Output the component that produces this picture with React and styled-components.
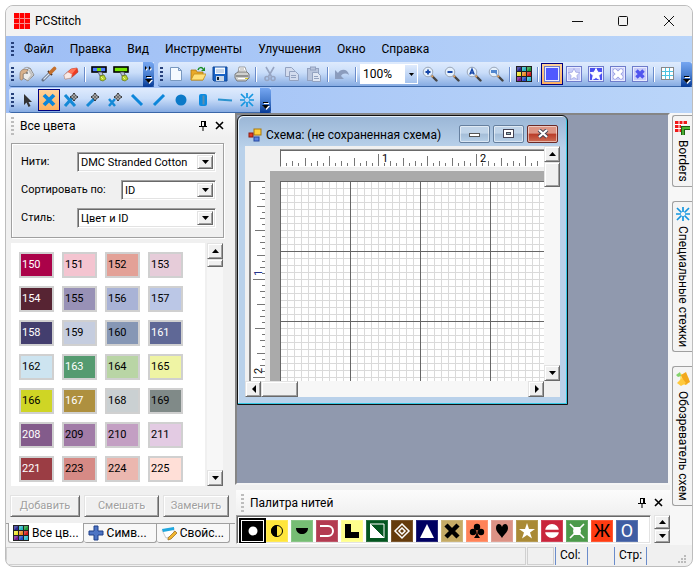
import { useState } from 'react';
import styled, { createGlobalStyle, css } from 'styled-components';

const MENU = ['Файл', 'Правка', 'Вид', 'Инструменты', 'Улучшения', 'Окно', 'Справка']

const THREADS = [
    ['150', '#ab0249', 1], ['151', '#f4c4d0'], ['152', '#e3a197'], ['153', '#e6ccd9'],
    ['154', '#572433', 1], ['155', '#9891b6'], ['156', '#a9b3d6'], ['157', '#bbc7e6'],
    ['158', '#433e6e', 1], ['159', '#c5cddf'], ['160', '#8697b5'], ['161', '#5f6896', 1],
    ['162', '#cde4f0'], ['163', '#559b70', 1], ['164', '#b9d5a5'], ['165', '#eff4a4'],
    ['166', '#cfd525'], ['167', '#ae903f', 1], ['168', '#cad0d2'], ['169', '#808a88'],
    ['208', '#835b8b', 1], ['209', '#a17ba7'], ['210', '#c39fc3'], ['211', '#e3cbe3'],
    ['221', '#9b3d44', 1], ['223', '#d68a85'], ['224', '#ebb7af'], ['225', '#ffdfd7'],
]

const TILES = ['#2a2a90', '#27b5c4', '#1f9a3a', '#f0e52c', '#f08a20', '#d01818', '#7a1890', '#2448c8', '#30b8d0']

const MiniColors = () => (
    <svg width="16" height="16" viewBox="0 0 16 16" aria-hidden="true">
        <rect width="16" height="16" fill="#222" />
        {TILES.map((c, i) => (
            <g key={c}>
                <rect x={(i % 3) * 5 + 1} y={Math.floor(i / 3) * 5 + 1} width="4" height="4" fill={c} />
                <path d={`M${(i % 3) * 5 + 1} ${Math.floor(i / 3) * 5 + 5}v-4h4z`} fill="#fff" opacity=".22" />
            </g>
        ))}
    </svg>
)

const Lens = ({ children }) => (
    <>
        <path d="M9.500 9.500L14.500 14.500" stroke="#444" strokeWidth="2.400" strokeLinecap="round" />
        <path d="M9.500 9.500l1.500 1.500" stroke="#d9a066" strokeWidth="2" />
        <circle cx="6" cy="6" r="4.800" fill="#e4f0fc" stroke="#9aa6b8" />
        {children}
    </>
)

const Target = ({ x, y }) => (
    <g transform={`translate(${x} ${y})`}>
        <path d="M0-4L1.500-1.500 4 0 1.500 1.500 0 4-1.500 1.500-4 0-1.500-1.500z" fill="#fff" stroke="#222" />
        <path d="M0-2v4M-2 0h4" stroke="#222" strokeWidth=".8" />
    </g>
)

const Marker = ({ multi }) => (
    <>
        <rect x="1" y="1" width="14" height="5" fill={multi ? '#4d7dff' : '#74e600'} stroke="#000" strokeWidth="1.600" />
        {multi && <rect x="6" y="2" width="4" height="3" fill="#7be000" />}
        <path d="M7 6l2 4 3-1-1-3z" fill="#b9c2d2" stroke="#445" strokeWidth=".7" />
        <path d="M9 10l4-1 2 4-3 2-3-1z" fill="#b9d432" stroke="#5f7408" strokeWidth=".7" />
        <path d="M10 11l2 2" stroke="#eff793" />
    </>
)

const STAR = 'M8 2.500l1.800 3.700 4 .5-3 2.800.8 4L8 11.500 4.400 13.500l.8-4-3-2.800 4-.5z'

const Framed = ({ fill = '#c9cdf8', children }) => (
    <>
        <rect x=".5" y=".5" width="15" height="15" fill="#e9ebff" stroke="#6e7ccb" />
        <rect x="2" y="2" width="12" height="12" fill={fill} />
        {children}
    </>
)

const GLYPHS = {
    bucket: <>
        <path d="M4 4C5 1 10 0 12 4" fill="none" stroke="#999" />
        <path d="M4 6l7-4 4 7-6 6-5-3z" fill="#ececec" stroke="#8c8c8c" />
        <path d="M10 4l3 5-4 5" fill="none" stroke="#c2c2c2" strokeWidth="2" />
        <path d="M9 4C5 2 1 4 1 8v5c1 2 3 1 3-1V8l3-1z" fill="#d8b18c" stroke="#94785e" strokeWidth=".7" />
        <circle cx="8" cy="7" r="1" fill="#777" />
    </>,
    dropper: <>
        <path d="M2 14L9 7" stroke="#657186" strokeWidth="3" strokeLinecap="round" />
        <path d="M2.500 13.500L9 7" stroke="#dbe7f5" strokeWidth="1.200" />
        <path d="M7 5l4 4" stroke="#4c3323" strokeWidth="2" />
        <path d="M9.500 6.500L13.500 2.500" stroke="#c4702d" strokeWidth="3.600" strokeLinecap="round" />
    </>,
    eraser: <>
        <path d="M1 9l7-6 6-1 1 4-7 6-6 1z" fill="#ef3b22" stroke="#a73520" strokeWidth=".6" />
        <path d="M1 9l4-3 4 2-1 4-6 1z" fill="#f8e9e5" stroke="#bbb" strokeWidth=".6" />
        <path d="M8 3l6-1-5 6-4-2z" fill="#ff7456" />
    </>,
    markMulti: <Marker multi />,
    mark: <Marker />,
    file: <path d="M2.500 1.500h8l3 3v10h-11z M10.500 1.500v3h3" fill="#f4faff" stroke="#7998bf" />,
    open: <>
        <path d="M1 14V4h5l1 2h6v8z" fill="#e9a92a" stroke="#b07a12" strokeWidth=".8" />
        <path d="M1 14l3-6h12l-3 6z" fill="#ffe07a" stroke="#c18d1a" strokeWidth=".8" />
        <path d="M8 4c1-3 4-3 5-1" fill="none" stroke="#1c8f2b" strokeWidth="1.500" /><path d="M15 1v4h-4z" fill="#1c8f2b" />
    </>,
    save: <>
        <path d="M1 1h14v14H2l-1-1z" fill="#1862c4" stroke="#0c4596" />
        <rect x="3" y="1.500" width="10" height="6.500" fill="#f4f9ff" /><path d="M4 4h8M4 6h8" stroke="#9ab4d6" />
        <rect x="4" y="10" width="8" height="5" fill="#c9d6e6" /><rect x="5" y="11" width="2" height="3" fill="#123" />
    </>,
    print: <>
        <path d="M4 7l1-6h6l2 6z" fill="#fff" stroke="#888" strokeWidth=".8" />
        <path d="M1 8l3-2h9l2 2v4l-3 3H3l-2-3z" fill="#cfd0ce" stroke="#666" strokeWidth=".8" />
        <path d="M2 10h12" stroke="#555" /><path d="M4 12.500h8" stroke="#fff" /><path d="M6 3h4M5 5h6" stroke="#aaa" />
        <rect x="11" y="12" width="3" height="1" fill="#d9cd2c" />
    </>,
    cut: <g fill="none" stroke="#97a5c2" strokeWidth="1.600"><path d="M4 1l5.500 9.500M12 1L6.500 10.500" /><circle cx="5" cy="12.500" r="2" /><circle cx="11" cy="12.500" r="2" /></g>,
    copy: <g fill="#d3dcee" stroke="#93a2c0"><path d="M1.500 1.500h6l3 3v6h-9z" /><path d="M5.500 5.500h6l3 3v6h-9z" /><path d="M7 9.500h5M7 11.500h5" /></g>,
    paste: <g fill="#b8c4dc" stroke="#93a2c0"><rect x="1.500" y="2.500" width="11" height="12" /><rect x="4.500" y="1" width="5" height="3" /><path d="M6.500 6.500h5l3 3v6h-8z" fill="#dfe6f3" /><path d="M8 10.500h4M8 12.500h5" /></g>,
    undo: <path d="M1 4v9h9L7 10c2-3 5-3 8-1-1-6-8-7-11-2z" fill="#8b9cbd" />,
    zoomIn: <Lens><path d="M3.500 6h5M6 3.500v5" stroke="#1646a8" strokeWidth="1.800" /></Lens>,
    zoomOut: <Lens><path d="M3.500 6h5" stroke="#1646a8" strokeWidth="1.800" /></Lens>,
    zoomAll: <Lens><path d="M3.800 8.500L6 3.200l2.200 5.300M4.500 7h3" stroke="#1646a8" strokeWidth="1.400" fill="none" /></Lens>,
    zoomArea: <Lens><path d="M3 4h6v5L7 7H3z" fill="#5187cf" /></Lens>,
    solid: <Framed fill="#5159ff" />,
    star: <Framed><path d={STAR} fill="#fff" stroke="#8d93dc" strokeWidth=".6" /></Framed>,
    starFull: <Framed fill="#4b50f0"><path d={STAR} fill="#fff" stroke="#fff" /></Framed>,
    cross: <Framed>
        <path d="M5 5l6 6M11 5l-6 6" stroke="#8d93dc" strokeWidth="4.600" strokeLinecap="round" />
        <path d="M5 5l6 6M11 5l-6 6" stroke="#fff" strokeWidth="3.600" strokeLinecap="round" />
    </Framed>,
    crossFull: <Framed><path d="M4.500 4.500l7 7M11.500 4.500l-7 7" stroke="#5054ef" strokeWidth="3.400" /></Framed>,
    grid: <>
        <rect x="2" y="2" width="12" height="12" fill="#fff" />
        <path d="M5.500 2v12M9.500 2v12M2 5.500h12M2 9.500h12" stroke="#4cc4e2" />
        <rect x="1.500" y="1.500" width="12" height="12" fill="none" stroke="#888" />
    </>,
    arrow: <path d="M5 2v11l2.500-2.500 2 4.500 2-1-2-4h3.500z" fill="#333" />,
    full: <path d="M3 3l10 10M13 3L3 13" stroke="#0c86da" strokeWidth="3.800" />,
    threeQuarter: <><path d="M2 3l10 11M10 5L2 14" stroke="#1489d6" strokeWidth="3" /><Target x="11" y="5" /></>,
    half: <><path d="M2 14l8-8" stroke="#1489d6" strokeWidth="3" /><Target x="10" y="5" /></>,
    quarter: <><path d="M2 7l6 7M8 7l-6 7" stroke="#1489d6" strokeWidth="2.500" /><Target x="11" y="5" /></>,
    back: <path d="M3 3l10 10" stroke="#0c86da" strokeWidth="3" />,
    slash: <path d="M13 3L3 13" stroke="#0c86da" strokeWidth="3" />,
    knot: <circle cx="8" cy="8" r="5.500" fill="#0b79c8" />,
    bead: <><rect x="4" y="2" width="8" height="12" rx="2" fill="#0d8be0" /><path d="M8.500 3.500v9" stroke="#5d8dae" strokeWidth="2" /></>,
    line: <path d="M1 7.500l14 1" stroke="#2c93cf" strokeWidth="2" />,
    burst: <path d="M8 1v5M8 10v5M1 8h5M10 8h5M2 2l4.500 4.500M9.500 9.500L14 14M14 2L9.500 6.500M6.500 9.500L2 14" stroke="#1496e0" strokeWidth="1.700" fill="none" />,
    plus: <path d="M6 1h4v5h5v4h-5v5H6v-5H1V6h5z" fill="#4d74c4" stroke="#1f3f88" />,
    note: <>
        <path d="M1 5l12-2v7l-8 3z" fill="#fff" stroke="#aaa" strokeWidth=".6" />
        <path d="M1 4l12-2v3L2 7z" fill="#21a8df" />
        <path d="M7 13l7-7 2 2-6 6-3 1z" fill="#f1b62e" stroke="#94661c" strokeWidth=".7" />
    </>,
    borders: <>
        <path d="M0 1h12v4H0zM0 5h6v7H0z" fill="#f01818" />
        <path d="M4 1v11M8 1v4M0 4.500h12M0 8.500h6" stroke="#fff" />
        <path d="M15 8H8v7" fill="none" stroke="#1d5c14" strokeWidth="4" />
        <path d="M15 8H8v7" fill="none" stroke="#4fb635" strokeWidth="1.800" />
    </>,
    browse: <>
        <path d="M5 2l9 5-2 7-7-1z" fill="#ffe27a" />
        <path d="M6 4l5-3 4 10-5 3z" fill="#f2a81d" />
        <path d="M2 12l5-5 4 5-5 3z" fill="#ffc93c" />
        <path d="M1 4l4-3 1 4-3 1z" fill="#84d46c" />
    </>,
    colors: null,
}

const Icon = ({ name }) => name === 'colors' ? <MiniColors /> : (
    <svg width="16" height="16" viewBox="0 0 16 16" aria-hidden="true">{GLYPHS[name]}</svg>
)

const TOOLS = [
    ['bucket', 'dropper', 'eraser', '|', 'markMulti', 'mark'],
    ['file', 'open', 'save', 'print', '|', 'cut', 'copy', 'paste', '|', 'undo', '|'],
    ['zoomIn', 'zoomOut', 'zoomAll', 'zoomArea', '|', 'colors', '|', 'solid', 'star', 'starFull', 'cross', 'crossFull', '|', 'grid'],
    ['arrow', 'full', 'threeQuarter', 'half', 'quarter', 'back', 'slash', 'knot', 'bead', 'line', 'burst'],
]

const TABS = [
    ['Все цв...', 'colors'],
    ['Симв...', 'plus'],
    ['Свойс...', 'note'],
]

const PALETTE = [
    ['#000', <circle cx="11" cy="11" r="4.500" fill="#fff" />],
    ['#ffe63c', <><circle cx="11" cy="11" r="5.500" fill="none" stroke="#000" /><path d="M11 5a6 6 0 0 0 0 12z" /></>],
    ['#76bd74', <path d="M5 8h12c0 8-12 8-12 0z" />],
    ['#b33b51', <path d="M4 6h8a5 5 0 0 1 0 10H4" fill="none" stroke="#fff" strokeWidth="2" />],
    ['#ffff8c', <path d="M4 4h6v8h8v6H4z" />],
    ['#04551f', <><path d="M4 4h14v14z" fill="#04551f" stroke="#fff" /><path d="M4 4v14h14z" fill="#fff" /></>],
    ['#653b0c', <><path d="M11 4l7 7-7 7-7-7z" fill="none" stroke="#fff" strokeWidth="1.500" /><path d="M11 8l3 3-3 3-3-3z" fill="none" stroke="#fff" strokeWidth="1.500" /></>],
    ['#000062', <path d="M11 4l7 14H4z" fill="#fff" />],
    ['#c5ab65', <path d="M5 5l12 12M17 5L5 17" stroke="#000" strokeWidth="4.500" />],
    ['#ff8359', <><circle cx="11" cy="7" r="3.200" /><circle cx="7" cy="12" r="3.200" /><circle cx="15" cy="12" r="3.200" /><path d="M11 9l1 6 2 3H8l2-3z" /></>],
    ['#dc9285', <path d="M11 18C8 13 5 12 5 8c0-5 5-5 6-1 1-4 6-4 6 1 0 4-3 5-6 10z" />],
    ['#aa8a36', <path d="M11 3l2 6h6l-5 3.500 2 6L11 15l-5 3.500 2-6L3 9h6z" fill="#fff" />],
    ['#c9253c', <><circle cx="11" cy="11" r="7" fill="#fff" /><path d="M3 11h16" stroke="#c9253c" strokeWidth="2.500" /></>],
    ['#4c9a4b', <><path d="M4 4l14 14M18 4L4 18" stroke="#fff" strokeWidth="1.600" /><path d="M8 7h6l1 4-1 4H8l-1-4z" fill="#fff" /></>],
    ['#ff3c12', 'Ж', '#000'],
    ['#3f5da3', 'O', '#fff'],
]

function Tools({ names, active }) {
    return names.map((name, i) => name === '|' ? <Sep key={i} /> : (
        <Tool key={i} type="button" aria-label={name} $active={name === active}>
            <Icon name={name} />
        </Tool>
    ))
}

function Overflow({ more }) {
    return (
        <OverflowBtn type="button" aria-label="Параметры">
            <svg width="9" height="20" viewBox="0 0 9 20">
                {more && <path d="M2 2l2 2-2 2zM6 2l2 2-2 2z" fill="#fff" />}
                {more && <path d="M1 1l2 2-2 2zM5 1l2 2-2 2z" />}
                <path d="M3 12.500h5" stroke="#fff" /><path d="M2 11.500h5" stroke="#000" />
                <path d="M2 15h7l-3.500 4z" fill="#fff" /><path d="M1 14h7l-3.500 4z" />
            </svg>
        </OverflowBtn>
    )
}

const TRIANGLES = { up: 'M0 6h7L3.500 2z', down: 'M0 2h7L3.500 6z', left: 'M6 0v8L2 4z', right: 'M2 0v8l4-4z' }

function Triangle({ dir }) {
    return <svg width="7" height="8" viewBox="0 0 7 8"><path d={TRIANGLES[dir]} /></svg>
}

function PanelHead({ title, inset }) {
    return (
        <Head $inset={inset}>
            <Grip $light />
            <HeadTitle>{title}</HeadTitle>
            <HeadBtn type="button" aria-label="Закрепить">
                <svg width="9" height="10" viewBox="0 0 9 10"><path d="M2 .5h5M2.500 0v5M5.500 0v5M6.500 0v5M0 5.500h8M4 6v4" stroke="#000" /></svg>
            </HeadBtn>
            <HeadBtn type="button" aria-label="Закрыть">
                <svg width="9" height="9" viewBox="0 0 9 9"><path d="M1 1l7 7M8 1L1 8" stroke="#000" strokeWidth="1.600" /></svg>
            </HeadBtn>
        </Head>
    )
}

function Field({ id, label, options, short }) {
    return (
        <Row>
            <label htmlFor={id}>{label}</label>
            <Combo $short={short}>
                <Select id={id}>
                    {options.map(o => <option key={o}>{o}</option>)}
                </Select>
                <Knob as="span"><Triangle dir="down" /></Knob>
            </Combo>
        </Row>
    )
}

// 98 units per inch, split into sixteenths
function ticks(count) {
    return Array.from({ length: count }, (_, i) => {
        const n = i + 1
        const size = n % 16 === 0 ? 12 : n % 8 === 0 ? 10 : n % 4 === 0 ? 8 : n % 2 === 0 ? 5 : 3
        return { pos: Math.round(n * 98 / 16) - 1, size }
    })
}

function TopRuler() {
    return (
        <RulerTop>
            <svg width="263" height="16">
                {ticks(42).map(t => <rect key={t.pos} x={t.pos} y={16 - t.size} width="1" height={t.size} fill="#777" />)}
                <text x="101" y="12" fontSize="11">1</text>
                <text x="199" y="12" fontSize="11">2</text>
            </svg>
        </RulerTop>
    )
}

function SideRuler() {
    return (
        <RulerSide>
            <svg width="14" height="200">
                {ticks(32).map(t => <rect key={t.pos} x={14 - t.size} y={t.pos} width={t.size} height="1" fill="#777" />)}
                <text transform="translate(11 94) rotate(-90)" fontSize="11" fill="#22328c">1</text>
                <text transform="translate(11 192) rotate(-90)" fontSize="11">2</text>
            </svg>
        </RulerSide>
    )
}

function Fabric() {
    return (
        <svg width="100%" height="100%">
            <defs>
                <pattern id="cell" width="7" height="7" patternUnits="userSpaceOnUse">
                    <path d="M0 .5h7M.5 0v7" stroke="#dadada" />
                </pattern>
                <pattern id="block" width="70" height="70" patternUnits="userSpaceOnUse">
                    <path d="M0 .5h70M.5 0v70" stroke="#666" />
                </pattern>
            </defs>
            <rect width="100%" height="100%" fill="#fff" />
            <rect width="100%" height="100%" fill="url(#cell)" />
            <rect width="100%" height="100%" fill="url(#block)" />
        </svg>
    )
}

export default function App() {
    const [tab, setTab] = useState(0)
    const [thread, setThread] = useState(0)

    return (
        <Desktop>
            <GlobalStyle />
            <Window>
                <TitleBar>
                    <svg width="16" height="16" viewBox="0 0 16 16">
                        <rect width="16" height="16" fill="#f00" />
                        <path d="M5.500 0v16M10.500 0v16M0 5.500h16M0 10.500h16" stroke="#f78d8d" />
                    </svg>
                    <AppName>PCStitch</AppName>
                    <CaptionBtn type="button" aria-label="Свернуть"><svg width="11" height="11"><path d="M0 5.500h11" stroke="#111" /></svg></CaptionBtn>
                    <CaptionBtn type="button" aria-label="Развернуть"><svg width="11" height="11"><rect x=".5" y=".5" width="9" height="9" rx="1" fill="none" stroke="#111" /></svg></CaptionBtn>
                    <CaptionBtn type="button" aria-label="Закрыть"><svg width="11" height="11"><path d="M0 0l10 10M10 0L0 10" stroke="#111" /></svg></CaptionBtn>
                </TitleBar>

                <Bars>
                    <Menu>
                        <Grip />
                        {MENU.map(m => <MenuItem key={m} type="button">{m}</MenuItem>)}
                    </Menu>
                    <BarRow>
                        <Toolbar $width="145px">
                            <Grip />
                            <Tools names={TOOLS[0]} />
                            <Overflow more />
                        </Toolbar>
                        <Toolbar $grow>
                            <Grip />
                            <Tools names={TOOLS[1]} />
                            <Zoom>
                                <Select aria-label="Масштаб"><option>100%</option></Select>
                                <ZoomArrow><svg width="5" height="3"><path d="M0 0h5L2.500 3z" /></svg></ZoomArrow>
                            </Zoom>
                            <Tools names={TOOLS[2]} active="solid" />
                            <Overflow />
                        </Toolbar>
                    </BarRow>
                    <BarRow>
                        <Toolbar $width="262px">
                            <Grip />
                            <Tools names={TOOLS[3]} active="full" />
                            <Overflow />
                        </Toolbar>
                    </BarRow>
                </Bars>

                <Body>
                    <Side>
                        <PanelHead title="Все цвета" inset />
                        <Group>
                            <Field id="threads" label="Нити:" options={['DMC Stranded Cotton']} />
                            <Field id="sort" label="Сортировать по:" options={['ID']} short />
                            <Field id="style" label="Стиль:" options={['Цвет и ID']} />
                        </Group>
                        <ColorList>
                            <Swatches>
                                {THREADS.map(([id, color, light]) => (
                                    <Swatch key={id} type="button" $color={color} $light={light}>{id}</Swatch>
                                ))}
                            </Swatches>
                            <Scroll>
                                <Knob type="button" aria-label="Вверх"><Triangle dir="up" /></Knob>
                                <Thumb $size="8px" />
                                <Track />
                                <Knob type="button" aria-label="Вниз"><Triangle dir="down" /></Knob>
                            </Scroll>
                        </ColorList>
                        <Actions>
                            <Action disabled>Добавить</Action>
                            <Action disabled>Смешать</Action>
                            <Action disabled>Заменить</Action>
                        </Actions>
                        <Tabs>
                            {TABS.map(([name, icon], i) => (
                                <Tab key={name} type="button" $active={tab === i} onClick={() => setTab(i)}>
                                    <Icon name={icon} />
                                    {name}
                                </Tab>
                            ))}
                        </Tabs>
                    </Side>

                    <Center>
                        <Workspace>
                            <Child>
                                <ChildTitle>
                                    <svg width="14" height="14" viewBox="0 0 14 14">
                                        <rect x="6" y="1" width="7" height="6" fill="#ffd23e" stroke="#a9780d" />
                                        <rect x="1" y="5" width="4" height="4" fill="#e23a22" stroke="#8c1c10" />
                                        <rect x="6" y="9" width="5" height="4" fill="#5a84e2" stroke="#26479e" />
                                    </svg>
                                    <ChildName>Схема: (не сохраненная схема)</ChildName>
                                    <ChildBtn type="button" aria-label="Свернуть окно"><svg width="12" height="10"><rect x=".5" y="4.500" width="10" height="3" fill="#fff" stroke="#555" /></svg></ChildBtn>
                                    <ChildBtn type="button" aria-label="Развернуть окно"><svg width="11" height="10"><rect x=".5" y=".5" width="10" height="8" fill="#fff" stroke="#445" /><rect x="3.500" y="3.500" width="4" height="2" fill="#9bb" stroke="#445" /></svg></ChildBtn>
                                    <ChildBtn type="button" aria-label="Закрыть окно" $danger><svg width="12" height="10"><path d="M2 1l8 7M10 1L2 8" stroke="#445" strokeWidth="4" /><path d="M2 1l8 7M10 1L2 8" stroke="#fff" strokeWidth="2.200" /></svg></ChildBtn>
                                </ChildTitle>
                                <Client>
                                    <Sheet>
                                        <TopRuler />
                                        <SheetRow>
                                            <SideRuler />
                                            <Cloth><Fabric /></Cloth>
                                        </SheetRow>
                                    </Sheet>
                                    <Scroll>
                                        <Knob type="button" aria-label="Вверх"><Triangle dir="up" /></Knob>
                                        <Thumb $size="25px" />
                                        <Track />
                                        <Knob type="button" aria-label="Вниз"><Triangle dir="down" /></Knob>
                                    </Scroll>
                                    <Scroll $row>
                                        <Knob type="button" aria-label="Влево"><Triangle dir="left" /></Knob>
                                        <Thumb $size="37px" $row />
                                        <Track />
                                        <Knob type="button" aria-label="Вправо"><Triangle dir="right" /></Knob>
                                    </Scroll>
                                </Client>
                            </Child>
                        </Workspace>

                        <Palette>
                            <PanelHead title="Палитра нитей" />
                            <PaletteRow>
                                <Chips>
                                    {PALETTE.map(([color, mark, ink], i) => (
                                        <Chip key={i} type="button" aria-label={`Нить ${i + 1}`} $color={color} $ink={ink} $active={thread === i} onClick={() => setThread(i)}>
                                            {ink ? mark : <svg width="22" height="22" viewBox="0 0 22 22">{mark}</svg>}
                                        </Chip>
                                    ))}
                                </Chips>
                                <Spin>
                                    <Knob type="button" aria-label="Выше"><Triangle dir="up" /></Knob>
                                    <Knob type="button" aria-label="Ниже"><Triangle dir="down" /></Knob>
                                </Spin>
                            </PaletteRow>
                        </Palette>
                    </Center>

                    <Dock>
                        <DockTab type="button"><Icon name="borders" />Borders</DockTab>
                        <DockTab type="button"><Icon name="burst" />Специальные стежки</DockTab>
                        <DockTab type="button"><Icon name="browse" />Обозреватель схем</DockTab>
                    </Dock>
                </Body>

                <Status>
                    <StatusBox $grow />
                    <StatusBox />
                    <StatusCell>Col:</StatusCell>
                    <StatusCell $empty />
                    <StatusCell>Стр:</StatusCell>
                    <StatusEnd>
                        <svg width="10" height="10" viewBox="0 0 10 10">
                            <path d="M6 0h2v2H6zM3 3h2v2H3zM6 3h2v2H6zM0 6h2v2H0zM3 6h2v2H3zM6 6h2v2H6z" fill="#bbb" />
                        </svg>
                    </StatusEnd>
                </Status>
            </Window>
        </Desktop>
    )
}

const GlobalStyle = createGlobalStyle`
    * {
        box-sizing: border-box;
    }
    body {
        margin: 0;
        background: #fff;
        font-family: Roboto, "Noto Sans", sans-serif;
        font-size: 12px;
        line-height: 16px;
        color: #000;
    }
    button, select {
        font: inherit;
        color: inherit;
        padding: 0;
        margin: 0;
        border: none;
        background: none;
    }
    svg {
        display: block;
        flex: none;
    }
`

const raised = css`
    border: 1px solid;
    border-color: #e3e3e3 #696969 #696969 #e3e3e3;
    box-shadow: inset 1px 1px #fff, inset -1px -1px #a0a0a0;
`

const sunken = css`
    border: 1px solid;
    border-color: #a0a0a0 #fff #fff #a0a0a0;
    box-shadow: inset 1px 1px #696969, inset -1px -1px #e3e3e3;
`

const Desktop = styled.div`
    display: flex;
    height: 100vh;
    min-height: 560px;
    padding: 5px 3px 4px 5px;
`

const Window = styled.div`
    flex: 1;
    min-width: 0;
    display: flex;
    flex-direction: column;
    border: 1px solid #bdbdbd;
    border-radius: 8px;
    background: #f0f0f0;
    overflow: hidden;
`

const TitleBar = styled.header`
    display: flex;
    align-items: center;
    height: 30px;
    padding-left: 8px;
    background: #f2f2f2;
`

const AppName = styled.div`
    flex: 1;
    padding-left: 5px;
`

const CaptionBtn = styled.button`
    display: flex;
    align-items: center;
    justify-content: center;
    width: 46px;
    height: 30px;
`

const Bars = styled.div`
    height: 77px;
    background: linear-gradient(to right, #9ebef5, #bad5f9);
`

const Menu = styled.nav`
    display: flex;
    align-items: center;
    height: 26px;
    padding-left: 5px;
`

const MenuItem = styled.button`
    padding: 0 8px;
`

const Grip = styled.span`
    flex: none;
    width: 3px;
    height: ${p => p.$light ? '18px' : '15px'};
    margin-right: 2px;
    background: repeating-linear-gradient(${p => p.$light ? '#bdbdbd' : '#27417b'} 0 2px, transparent 2px 4px);
`

const BarRow = styled.div`
    display: flex;
    gap: 4px;
    height: 26px;
    padding-left: 3px;
`

const Toolbar = styled.div`
    display: flex;
    align-items: center;
    flex: ${p => p.$grow ? 1 : 'none'};
    width: ${p => p.$width || 'auto'};
    min-width: 0;
    height: 25px;
    padding-left: 2px;
    border-bottom: 1px solid #3b67a8;
    border-radius: 3px 0 0 3px;
    background: linear-gradient(#dfebfd, #c9ddf9 45%, #86abe2);
`

const Tool = styled.button`
    display: flex;
    align-items: center;
    justify-content: center;
    flex: none;
    width: 22px;
    height: 22px;
    ${p => p.$active && css`
        border: 1px solid #000080;
        background: linear-gradient(#ffd39b, #feb05e);
    `}
`

const Sep = styled.span`
    flex: none;
    width: 2px;
    height: 15px;
    margin: 0 2px;
    border-left: 1px solid #6a8ccb;
    border-right: 1px solid #fff;
`

const OverflowBtn = styled.button`
    display: flex;
    align-items: center;
    justify-content: center;
    width: 11px;
    height: 25px;
    margin: 0 0 -1px auto;
    border-radius: 0 3px 3px 0;
    background: linear-gradient(#75a6f1, #4a7fd0 50%, #053995);
`

const Zoom = styled.div`
    display: flex;
    width: 58px;
    height: 20px;
    margin: 0 1px;
    background: #fff;
`

const ZoomArrow = styled.span`
    display: flex;
    align-items: center;
    justify-content: center;
    width: 12px;
    margin: 1px;
    background: linear-gradient(#dfebfd, #a5c3ee);
    pointer-events: none;
`

const Select = styled.select`
    appearance: none;
    flex: 1;
    min-width: 0;
    padding-left: 3px;
    outline: none;
`

const Body = styled.main`
    flex: 1;
    min-height: 0;
    display: flex;
`

const Side = styled.aside`
    flex: none;
    display: flex;
    flex-direction: column;
    width: 229px;
`

const Head = styled.div`
    display: flex;
    align-items: center;
    height: 25px;
    padding: 0 ${p => p.$inset ? '8px' : '4px'} 0 5px;
    background: linear-gradient(to bottom, #fcfcfc, #f0f0f0);
`

const HeadTitle = styled.div`
    flex: 1;
    padding-left: 4px;
`

const HeadBtn = styled.button`
    display: flex;
    align-items: center;
    justify-content: center;
    width: 16px;
    height: 16px;
`

const Group = styled.div`
    display: flex;
    flex-direction: column;
    gap: 8px;
    height: 95px;
    margin: 5px 11px 0 5px;
    padding: 8px 7px 0 9px;
    border: 1px solid #a0a0a0;
    box-shadow: inset 1px 1px #fff, 1px 1px #fff;
    font-size: 11px;
`

const Row = styled.div`
    display: flex;
    align-items: center;
    justify-content: space-between;
    height: 20px;
`

const Combo = styled.div`
    display: flex;
    width: ${p => p.$short ? '95px' : '139px'};
    height: 20px;
    padding: 2px 2px 2px 0;
    background: #fff;
    ${sunken}
`

const Knob = styled.button`
    display: flex;
    align-items: center;
    justify-content: center;
    flex: none;
    width: 16px;
    height: 16px;
    background: #f0f0f0;
    ${raised}
    ${Combo} & {
        height: 14px;
        pointer-events: none;
    }
`

const ColorList = styled.div`
    flex: 1;
    min-height: 0;
    display: flex;
    gap: 2px;
    margin: 5px 12px 0 5px;
`

const Swatches = styled.div`
    flex: 1;
    display: grid;
    grid-template-columns: repeat(4, 35px);
    grid-auto-rows: 26px;
    gap: 8px;
    padding: 9px 8px;
    background: #fff;
    overflow: hidden;
`

const Swatch = styled.button`
    border: 2px solid #d0d0d0;
    padding-left: 1px;
    font-size: 11px;
    text-align: left;
    background: ${p => p.$color};
    color: ${p => p.$light ? '#fff' : '#000'};
`

const Scroll = styled.div`
    display: flex;
    flex-direction: ${p => p.$row ? 'row' : 'column'};
    background: #f7f7f7;
`

const Thumb = styled.span`
    flex: none;
    width: ${p => p.$row ? p.$size : '16px'};
    height: ${p => p.$row ? '16px' : p.$size};
    background: #f0f0f0;
    ${raised}
`

const Track = styled.span`
    flex: 1;
`

const Actions = styled.div`
    display: grid;
    grid-template-columns: 70px 75px 66px;
    gap: 4px;
    padding: 9px 0 6px 4px;
`

const Action = styled.button`
    height: 22px;
    font-size: 11px;
    color: #a0a0a0;
    text-shadow: 1px 1px #fff;
    ${raised}
`

const Tabs = styled.div`
    display: flex;
    height: 22px;
    padding: 0 5px 2px 2px;
    border-top: 1px solid #a0a0a0;
`

const Tab = styled.button`
    display: flex;
    align-items: center;
    flex: 1;
    gap: 3px;
    padding: 0 4px;
    white-space: nowrap;
    border: 1px solid #a0a0a0;
    border-top: none;
    border-left-width: ${p => p.$active ? '1px' : 0};
    border-radius: 0 0 3px 3px;
    background: ${p => p.$active ? '#fff' : '#f8f8f8'};
    margin-top: ${p => p.$active ? '-1px' : 0};
`

const Center = styled.section`
    flex: 1;
    min-width: 0;
    display: flex;
    flex-direction: column;
`

const Workspace = styled.div`
    flex: 1;
    min-height: 0;
    background: #9099ae;
    border: 2px solid;
    border-color: #858585 #f5f5f5 #f5f5f5 #858585;
    overflow: hidden;
`

const Child = styled.section`
    display: flex;
    flex-direction: column;
    width: 331px;
    height: 290px;
    padding: 0 7px 7px;
    border: 1px solid #111;
    border-radius: 6px 6px 0 0;
    box-shadow: inset -1px -1px #35c8e4, inset 1px 1px #e6f1fb;
    background: linear-gradient(#9ab6d6, #b9d1ea 32px);
`

const ChildTitle = styled.div`
    display: flex;
    align-items: center;
    gap: 3px;
    height: 30px;
    padding: 7px 2px 0 3px;
`

const ChildName = styled.div`
    flex: 1;
    padding-left: 1px;
    white-space: nowrap;
`

const ChildBtn = styled.button`
    display: flex;
    align-items: center;
    justify-content: center;
    width: 31px;
    height: 18px;
    margin-bottom: 1px;
    border: 1px solid ${p => p.$danger ? '#6c2a26' : '#66809f'};
    border-radius: 2px;
    box-shadow: inset 0 0 0 1px rgba(255, 255, 255, 0.5);
    background: ${p => p.$danger ? 'linear-gradient(#dd9585 45%, #b93c28 50%, #cd6d55)' : 'linear-gradient(#c0d4e9 45%, #a4bdd8 50%, #b7d0e8)'};
`

const Client = styled.div`
    flex: 1;
    min-height: 0;
    display: grid;
    grid-template-columns: 1fr 16px;
    grid-template-rows: 1fr 16px;
    background: #f0f0f0;
`

const Sheet = styled.div`
    min-width: 0;
    min-height: 0;
    display: flex;
    flex-direction: column;
    overflow: hidden;
`

const RulerTop = styled.div`
    flex: none;
    height: 18px;
    margin: 3px 0 4px 35px;
    border-top: 1px solid #a0a0a0;
    border-left: 1px solid #696969;
    border-bottom: 1px solid #fff;
    box-shadow: inset 0 1px #696969;
    background: #fff;
    overflow: hidden;
`

const SheetRow = styled.div`
    flex: 1;
    min-height: 0;
    display: flex;
`

const RulerSide = styled.div`
    flex: none;
    width: 16px;
    margin: 10px 5px 0 4px;
    border-left: 2px solid #858585;
    border-top: 1px solid #696969;
    background: #fff;
    overflow: hidden;
`

const Cloth = styled.div`
    flex: 1;
    min-width: 0;
    padding: 10px 0 0 10px;
    background: #aaa;
`

const Palette = styled.section`
    padding: 5px 0 0 1px;
`

const PaletteRow = styled.div`
    display: flex;
    justify-content: space-between;
    gap: 3px;
    height: 30px;
    padding-bottom: 1px;
`

const Chips = styled.div`
    flex: 1;
    min-width: 0;
    display: flex;
    align-items: center;
    gap: 3px;
    padding: 3px 3px 0 2px;
    background: #fff;
    overflow: hidden;
    ${sunken}
`

const Chip = styled.button`
    display: flex;
    align-items: center;
    justify-content: center;
    flex: none;
    width: 22px;
    height: 22px;
    font-size: 18px;
    line-height: 20px;
    background: ${p => p.$color};
    color: ${p => p.$ink || '#000'};
    box-shadow: inset 0 0 0 1px rgba(255, 255, 255, 0.15);
    ${p => p.$active && css`
        width: 27px;
        height: 26px;
        margin-right: -3px;
        border: 2px solid #000;
        outline: 1px solid #fff;
        outline-offset: -3px;
    `}
`

const Spin = styled.div`
    display: flex;
    flex-direction: column;
    button {
        height: 14px;
    }
`

const Dock = styled.aside`
    flex: none;
    display: flex;
    flex-direction: column;
    align-items: flex-end;
    gap: 14px;
    width: 22px;
    padding-top: 2px;
    background: #f7f7f7;
`

const DockTab = styled.button`
    display: flex;
    align-items: center;
    gap: 4px;
    width: 20px;
    padding: 4px 0;
    writing-mode: vertical-rl;
    white-space: nowrap;
    border: 1px solid #a0a0a0;
    border-right: none;
    border-radius: 3px 0 0 3px;
    background: #f4f4f4;
`

const Status = styled.footer`
    display: flex;
    align-items: center;
    height: 21px;
`

const StatusBox = styled.div`
    align-self: stretch;
    flex: ${p => p.$grow ? 1 : 'none'};
    width: 27px;
    margin: 2px 1px 1px 0;
    border: 1px solid #d0d0d0;
`

const StatusCell = styled.div`
    width: ${p => p.$empty ? '27px' : '32px'};
    height: 18px;
    padding-left: 4px;
    border-left: 1px solid #6a8ccb;
`

const StatusEnd = styled.div`
    display: flex;
    align-items: flex-end;
    justify-content: flex-end;
    width: 46px;
    height: 18px;
    padding-right: 4px;
    border-left: 1px solid #6a8ccb;
`
